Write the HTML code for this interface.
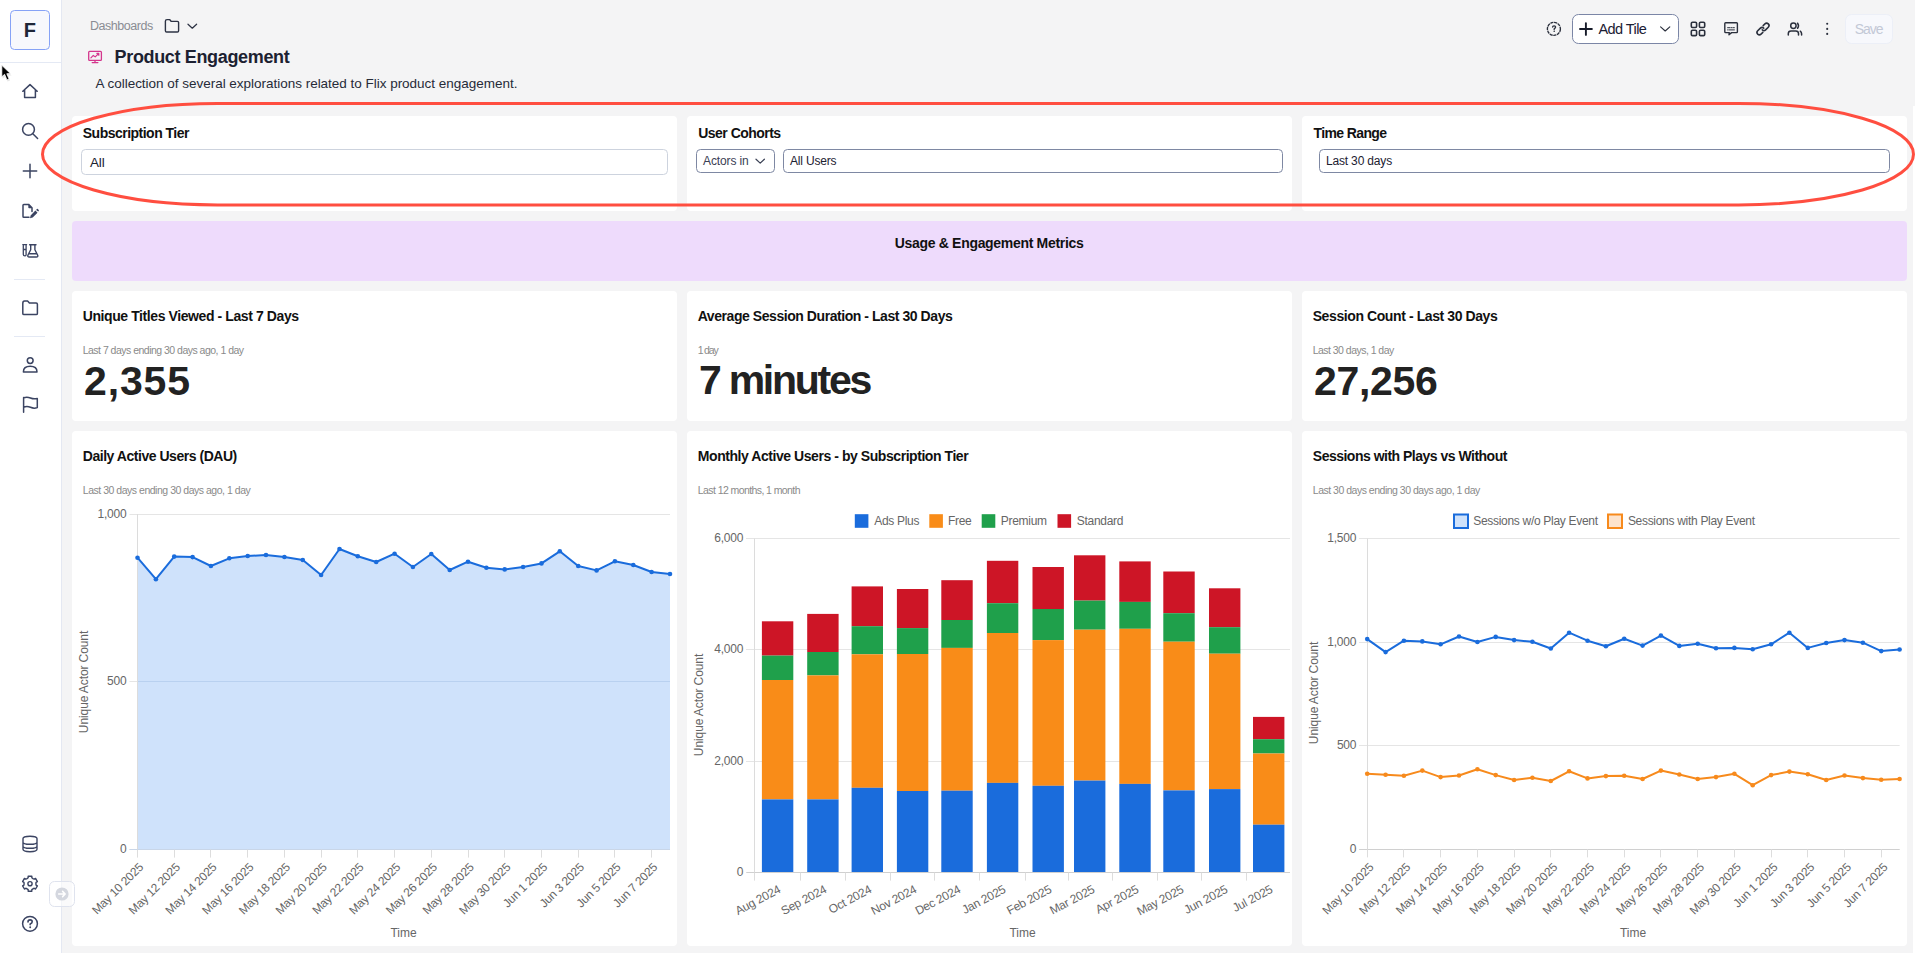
<!DOCTYPE html>
<html><head><meta charset="utf-8"><title>Product Engagement</title>
<style>html,body{margin:0;padding:0;width:1915px;height:953px;overflow:hidden;background:#f4f4f5}
svg{display:block;font-family:"Liberation Sans", sans-serif}</style></head>
<body><svg width="1915" height="953" viewBox="0 0 1915 953">
<rect x="0" y="0" width="1915" height="953" rx="0" fill="#f4f4f5" />
<rect x="0" y="0" width="61" height="953" rx="0" fill="#ffffff" />
<rect x="61" y="0" width="1" height="953" rx="0" fill="#e4e8f2" />
<rect x="0" y="62" width="61" height="1" rx="0" fill="#e4e9f4" />
<rect x="14" y="279" width="31" height="1" rx="0" fill="#e4e9f4" />
<rect x="14" y="336" width="31" height="1" rx="0" fill="#e4e9f4" />
<rect x="10.5" y="10.5" width="39" height="39" rx="4" fill="#f7f8fc" stroke="#86a2f6" stroke-width="1" />
<text x="23.80" y="37" font-size="20" font-weight="700" fill="#1e2638" letter-spacing="0.000" text-anchor="start" >F</text>
<rect x="1913" y="106" width="2" height="847" rx="0" fill="#ffffff" />
<rect x="72" y="116" width="605" height="95" rx="4" fill="#ffffff" />
<rect x="72" y="291" width="605" height="130" rx="4" fill="#ffffff" />
<rect x="72" y="431" width="605" height="515" rx="4" fill="#ffffff" />
<rect x="687" y="116" width="605" height="95" rx="4" fill="#ffffff" />
<rect x="687" y="291" width="605" height="130" rx="4" fill="#ffffff" />
<rect x="687" y="431" width="605" height="515" rx="4" fill="#ffffff" />
<rect x="1302" y="116" width="605" height="95" rx="4" fill="#ffffff" />
<rect x="1302" y="291" width="605" height="130" rx="4" fill="#ffffff" />
<rect x="1302" y="431" width="605" height="515" rx="4" fill="#ffffff" />
<rect x="72" y="221" width="1835" height="60" rx="4" fill="#eedbfc" />
<text x="89.90" y="30.1" font-size="12.5" font-weight="400" fill="#8a8c93" letter-spacing="-0.450" text-anchor="start" >Dashboards</text>
<text x="114.60" y="63.1" font-size="18" font-weight="700" fill="#1c2131" letter-spacing="-0.349" text-anchor="start" >Product Engagement</text>
<text x="95.50" y="87.9" font-size="13.5" font-weight="400" fill="#262b38" letter-spacing="-0.019" text-anchor="start" >A collection of several explorations related to Flix product engagement.</text>
<text x="82.80" y="137.8" font-size="14" font-weight="700" fill="#111111" letter-spacing="-0.514" text-anchor="start" >Subscription Tier</text>
<text x="698.30" y="138" font-size="14" font-weight="700" fill="#111111" letter-spacing="-0.536" text-anchor="start" >User Cohorts</text>
<text x="1313.50" y="138" font-size="14" font-weight="700" fill="#111111" letter-spacing="-0.613" text-anchor="start" >Time Range</text>
<rect x="81.5" y="149.5" width="586" height="25" rx="4" fill="#ffffff" stroke="#cdd3de" stroke-width="1" />
<text x="90.00" y="167" font-size="13.5" font-weight="400" fill="#1c2131" letter-spacing="-0.152" text-anchor="start" >All</text>
<rect x="696.5" y="149.5" width="78" height="23" rx="4" fill="#ffffff" stroke="#7e88a3" stroke-width="1" />
<text x="703.00" y="165" font-size="12" font-weight="400" fill="#3a4054" letter-spacing="-0.126" text-anchor="start" >Actors in</text>
<rect x="783.5" y="149.5" width="499" height="23" rx="4" fill="#ffffff" stroke="#7e88a3" stroke-width="1" />
<text x="790.00" y="165" font-size="12" font-weight="400" fill="#1c2131" letter-spacing="-0.188" text-anchor="start" >All Users</text>
<rect x="1319.5" y="149.5" width="570" height="23" rx="4" fill="#ffffff" stroke="#7e88a3" stroke-width="1" />
<text x="1325.90" y="165" font-size="12" font-weight="400" fill="#1c2131" letter-spacing="-0.159" text-anchor="start" >Last 30 days</text>
<text x="894.70" y="247.6" font-size="14" font-weight="700" fill="#111111" letter-spacing="-0.310" text-anchor="start" >Usage &amp; Engagement Metrics</text>
<text x="82.70" y="321.1" font-size="14" font-weight="700" fill="#111111" letter-spacing="-0.406" text-anchor="start" >Unique Titles Viewed - Last 7 Days</text>
<text x="82.70" y="354.2" font-size="10.5" font-weight="400" fill="#8a8a8a" letter-spacing="-0.512" text-anchor="start" >Last 7 days ending 30 days ago, 1 day</text>
<text x="84.00" y="395.2" font-size="41" font-weight="700" fill="#222222" letter-spacing="0.876" text-anchor="start" >2,355</text>
<text x="697.70" y="321.1" font-size="14" font-weight="700" fill="#111111" letter-spacing="-0.440" text-anchor="start" >Average Session Duration - Last 30 Days</text>
<text x="697.70" y="354.2" font-size="10.5" font-weight="400" fill="#8a8a8a" letter-spacing="-1.184" text-anchor="start" >1 day</text>
<text x="699.00" y="394" font-size="41" font-weight="700" fill="#222222" letter-spacing="-2.261" text-anchor="start" >7 minutes</text>
<text x="1312.70" y="321.1" font-size="14" font-weight="700" fill="#111111" letter-spacing="-0.406" text-anchor="start" >Session Count - Last 30 Days</text>
<text x="1312.70" y="354.2" font-size="10.5" font-weight="400" fill="#8a8a8a" letter-spacing="-0.528" text-anchor="start" >Last 30 days, 1 day</text>
<text x="1314.00" y="395.2" font-size="41" font-weight="700" fill="#222222" letter-spacing="-0.320" text-anchor="start" >27,256</text>
<text x="82.80" y="461" font-size="14" font-weight="700" fill="#111111" letter-spacing="-0.468" text-anchor="start" >Daily Active Users (DAU)</text>
<text x="82.80" y="494.2" font-size="10.5" font-weight="400" fill="#8a8a8a" letter-spacing="-0.478" text-anchor="start" >Last 30 days ending 30 days ago, 1 day</text>
<text x="697.80" y="461" font-size="14" font-weight="700" fill="#111111" letter-spacing="-0.442" text-anchor="start" >Monthly Active Users - by Subscription Tier</text>
<text x="697.80" y="494.2" font-size="10.5" font-weight="400" fill="#8a8a8a" letter-spacing="-0.583" text-anchor="start" >Last 12 months, 1 month</text>
<text x="1312.80" y="461" font-size="14" font-weight="700" fill="#111111" letter-spacing="-0.503" text-anchor="start" >Sessions with Plays vs Without</text>
<text x="1312.80" y="494.2" font-size="10.5" font-weight="400" fill="#8a8a8a" letter-spacing="-0.492" text-anchor="start" >Last 30 days ending 30 days ago, 1 day</text>
<rect x="1572.5" y="14.5" width="106" height="29" rx="6" fill="#ffffff" stroke="#7b86a6" stroke-width="1" />
<text x="1598.50" y="34.1" font-size="14.5" font-weight="400" fill="#1b2033" letter-spacing="-0.570" text-anchor="start" >Add Tile</text>
<rect x="1845.5" y="14.5" width="47" height="29" rx="6" fill="#f7f8fc" stroke="#eceff7" stroke-width="1" />
<text x="1854.80" y="33.8" font-size="14" font-weight="400" fill="#c3c8d6" letter-spacing="-1.075" text-anchor="start" >Save</text>
<line x1="129.5" y1="514.5" x2="670.0" y2="514.5" stroke="#e5e5e5" stroke-width="1" />
<text x="126.5" y="517.7" font-size="12" fill="#666666" text-anchor="end" letter-spacing="-0.2">1,000</text>
<line x1="129.5" y1="681.5" x2="670.0" y2="681.5" stroke="#e5e5e5" stroke-width="1" />
<text x="126.5" y="685.4" font-size="12" fill="#666666" text-anchor="end" letter-spacing="-0.2">500</text>
<line x1="129.5" y1="849.5" x2="670.0" y2="849.5" stroke="#e5e5e5" stroke-width="1" />
<text x="126.5" y="853.1" font-size="12" fill="#666666" text-anchor="end" letter-spacing="-0.2">0</text>
<polygon points="137.5,849.6 137.5,557.7 155.9,579.2 174.2,556.6 192.6,557.1 210.9,566.0 229.3,558.3 247.7,556.0 266.0,555.0 284.4,557.0 302.8,560.0 321.1,575.0 339.5,549.0 357.8,556.3 376.2,562.0 394.6,553.7 412.9,567.0 431.3,554.0 449.7,570.0 468.0,561.7 486.4,567.7 504.7,569.4 523.1,567.0 541.5,563.4 559.8,551.3 578.2,566.0 596.6,570.4 614.9,561.3 633.3,565.0 651.6,572.0 670.0,574.0 670.0,849.6" fill="#cfe2fb"/>
<line x1="137.5" y1="681.5" x2="670.0" y2="681.5" stroke="#b9d1f0" stroke-width="1" />
<line x1="137.5" y1="514.2" x2="137.5" y2="849.6" stroke="#dcdcdc" stroke-width="1" />
<line x1="129.5" y1="849.5" x2="670.0" y2="849.5" stroke="#c9d6e8" stroke-width="1" />
<polyline points="137.5,557.7 155.9,579.2 174.2,556.6 192.6,557.1 210.9,566.0 229.3,558.3 247.7,556.0 266.0,555.0 284.4,557.0 302.8,560.0 321.1,575.0 339.5,549.0 357.8,556.3 376.2,562.0 394.6,553.7 412.9,567.0 431.3,554.0 449.7,570.0 468.0,561.7 486.4,567.7 504.7,569.4 523.1,567.0 541.5,563.4 559.8,551.3 578.2,566.0 596.6,570.4 614.9,561.3 633.3,565.0 651.6,572.0 670.0,574.0" fill="none" stroke="#1a6cdc" stroke-width="2" stroke-linejoin="round"/>
<circle cx="137.5" cy="557.7" r="2.3" fill="#1a6cdc"/>
<circle cx="155.9" cy="579.2" r="2.3" fill="#1a6cdc"/>
<circle cx="174.2" cy="556.6" r="2.3" fill="#1a6cdc"/>
<circle cx="192.6" cy="557.1" r="2.3" fill="#1a6cdc"/>
<circle cx="210.9" cy="566.0" r="2.3" fill="#1a6cdc"/>
<circle cx="229.3" cy="558.3" r="2.3" fill="#1a6cdc"/>
<circle cx="247.7" cy="556.0" r="2.3" fill="#1a6cdc"/>
<circle cx="266.0" cy="555.0" r="2.3" fill="#1a6cdc"/>
<circle cx="284.4" cy="557.0" r="2.3" fill="#1a6cdc"/>
<circle cx="302.8" cy="560.0" r="2.3" fill="#1a6cdc"/>
<circle cx="321.1" cy="575.0" r="2.3" fill="#1a6cdc"/>
<circle cx="339.5" cy="549.0" r="2.3" fill="#1a6cdc"/>
<circle cx="357.8" cy="556.3" r="2.3" fill="#1a6cdc"/>
<circle cx="376.2" cy="562.0" r="2.3" fill="#1a6cdc"/>
<circle cx="394.6" cy="553.7" r="2.3" fill="#1a6cdc"/>
<circle cx="412.9" cy="567.0" r="2.3" fill="#1a6cdc"/>
<circle cx="431.3" cy="554.0" r="2.3" fill="#1a6cdc"/>
<circle cx="449.7" cy="570.0" r="2.3" fill="#1a6cdc"/>
<circle cx="468.0" cy="561.7" r="2.3" fill="#1a6cdc"/>
<circle cx="486.4" cy="567.7" r="2.3" fill="#1a6cdc"/>
<circle cx="504.7" cy="569.4" r="2.3" fill="#1a6cdc"/>
<circle cx="523.1" cy="567.0" r="2.3" fill="#1a6cdc"/>
<circle cx="541.5" cy="563.4" r="2.3" fill="#1a6cdc"/>
<circle cx="559.8" cy="551.3" r="2.3" fill="#1a6cdc"/>
<circle cx="578.2" cy="566.0" r="2.3" fill="#1a6cdc"/>
<circle cx="596.6" cy="570.4" r="2.3" fill="#1a6cdc"/>
<circle cx="614.9" cy="561.3" r="2.3" fill="#1a6cdc"/>
<circle cx="633.3" cy="565.0" r="2.3" fill="#1a6cdc"/>
<circle cx="651.6" cy="572.0" r="2.3" fill="#1a6cdc"/>
<circle cx="670.0" cy="574.0" r="2.3" fill="#1a6cdc"/>
<line x1="137.5" y1="849.6" x2="137.5" y2="857.6" stroke="#dddddd" stroke-width="1" />
<text x="144.0" y="868.0" font-size="12" fill="#666666" text-anchor="end" transform="rotate(-45 144.0 868.0)" letter-spacing="-0.25">May 10 2025</text>
<line x1="174.5" y1="849.6" x2="174.5" y2="857.6" stroke="#dddddd" stroke-width="1" />
<text x="180.7" y="868.0" font-size="12" fill="#666666" text-anchor="end" transform="rotate(-45 180.7 868.0)" letter-spacing="-0.25">May 12 2025</text>
<line x1="210.5" y1="849.6" x2="210.5" y2="857.6" stroke="#dddddd" stroke-width="1" />
<text x="217.4" y="868.0" font-size="12" fill="#666666" text-anchor="end" transform="rotate(-45 217.4 868.0)" letter-spacing="-0.25">May 14 2025</text>
<line x1="247.5" y1="849.6" x2="247.5" y2="857.6" stroke="#dddddd" stroke-width="1" />
<text x="254.2" y="868.0" font-size="12" fill="#666666" text-anchor="end" transform="rotate(-45 254.2 868.0)" letter-spacing="-0.25">May 16 2025</text>
<line x1="284.5" y1="849.6" x2="284.5" y2="857.6" stroke="#dddddd" stroke-width="1" />
<text x="290.9" y="868.0" font-size="12" fill="#666666" text-anchor="end" transform="rotate(-45 290.9 868.0)" letter-spacing="-0.25">May 18 2025</text>
<line x1="321.5" y1="849.6" x2="321.5" y2="857.6" stroke="#dddddd" stroke-width="1" />
<text x="327.6" y="868.0" font-size="12" fill="#666666" text-anchor="end" transform="rotate(-45 327.6 868.0)" letter-spacing="-0.25">May 20 2025</text>
<line x1="357.5" y1="849.6" x2="357.5" y2="857.6" stroke="#dddddd" stroke-width="1" />
<text x="364.3" y="868.0" font-size="12" fill="#666666" text-anchor="end" transform="rotate(-45 364.3 868.0)" letter-spacing="-0.25">May 22 2025</text>
<line x1="394.5" y1="849.6" x2="394.5" y2="857.6" stroke="#dddddd" stroke-width="1" />
<text x="401.1" y="868.0" font-size="12" fill="#666666" text-anchor="end" transform="rotate(-45 401.1 868.0)" letter-spacing="-0.25">May 24 2025</text>
<line x1="431.5" y1="849.6" x2="431.5" y2="857.6" stroke="#dddddd" stroke-width="1" />
<text x="437.8" y="868.0" font-size="12" fill="#666666" text-anchor="end" transform="rotate(-45 437.8 868.0)" letter-spacing="-0.25">May 26 2025</text>
<line x1="468.5" y1="849.6" x2="468.5" y2="857.6" stroke="#dddddd" stroke-width="1" />
<text x="474.5" y="868.0" font-size="12" fill="#666666" text-anchor="end" transform="rotate(-45 474.5 868.0)" letter-spacing="-0.25">May 28 2025</text>
<line x1="504.5" y1="849.6" x2="504.5" y2="857.6" stroke="#dddddd" stroke-width="1" />
<text x="511.2" y="868.0" font-size="12" fill="#666666" text-anchor="end" transform="rotate(-45 511.2 868.0)" letter-spacing="-0.25">May 30 2025</text>
<line x1="541.5" y1="849.6" x2="541.5" y2="857.6" stroke="#dddddd" stroke-width="1" />
<text x="548.0" y="868.0" font-size="12" fill="#666666" text-anchor="end" transform="rotate(-45 548.0 868.0)" letter-spacing="-0.25">Jun 1 2025</text>
<line x1="578.5" y1="849.6" x2="578.5" y2="857.6" stroke="#dddddd" stroke-width="1" />
<text x="584.7" y="868.0" font-size="12" fill="#666666" text-anchor="end" transform="rotate(-45 584.7 868.0)" letter-spacing="-0.25">Jun 3 2025</text>
<line x1="614.5" y1="849.6" x2="614.5" y2="857.6" stroke="#dddddd" stroke-width="1" />
<text x="621.4" y="868.0" font-size="12" fill="#666666" text-anchor="end" transform="rotate(-45 621.4 868.0)" letter-spacing="-0.25">Jun 5 2025</text>
<line x1="651.5" y1="849.6" x2="651.5" y2="857.6" stroke="#dddddd" stroke-width="1" />
<text x="658.1" y="868.0" font-size="12" fill="#666666" text-anchor="end" transform="rotate(-45 658.1 868.0)" letter-spacing="-0.25">Jun 7 2025</text>
<text x="403.5" y="937" font-size="12" fill="#666666" text-anchor="middle">Time</text>
<text x="88" y="682" font-size="12" fill="#666666" text-anchor="middle" transform="rotate(-90 88 682)" letter-spacing="-0.1">Unique Actor Count</text>
<line x1="746" y1="538.5" x2="1290.0" y2="538.5" stroke="#e5e5e5" stroke-width="1" />
<text x="743.3" y="542.0" font-size="12" fill="#666666" text-anchor="end" letter-spacing="-0.2">6,000</text>
<line x1="746" y1="649.5" x2="1290.0" y2="649.5" stroke="#e5e5e5" stroke-width="1" />
<text x="743.3" y="653.3" font-size="12" fill="#666666" text-anchor="end" letter-spacing="-0.2">4,000</text>
<line x1="746" y1="761.5" x2="1290.0" y2="761.5" stroke="#e5e5e5" stroke-width="1" />
<text x="743.3" y="764.7" font-size="12" fill="#666666" text-anchor="end" letter-spacing="-0.2">2,000</text>
<line x1="746" y1="872.5" x2="1290.0" y2="872.5" stroke="#e5e5e5" stroke-width="1" />
<text x="743.3" y="876.0" font-size="12" fill="#666666" text-anchor="end" letter-spacing="-0.2">0</text>
<line x1="754.5" y1="538.6" x2="754.5" y2="872.6" stroke="#dcdcdc" stroke-width="1" />
<rect x="761.9" y="621.3" width="31.4" height="34.30000000000007" rx="0" fill="#cd1526" />
<rect x="761.9" y="655.6" width="31.4" height="24.399999999999977" rx="0" fill="#1fa04b" />
<rect x="761.9" y="680.0" width="31.4" height="119.39999999999998" rx="0" fill="#f98c18" />
<rect x="761.9" y="799.4" width="31.4" height="73.20000000000005" rx="0" fill="#1a6cdc" />
<rect x="807.2" y="613.9" width="31.4" height="38.10000000000002" rx="0" fill="#cd1526" />
<rect x="807.2" y="652.0" width="31.4" height="23.399999999999977" rx="0" fill="#1fa04b" />
<rect x="807.2" y="675.4" width="31.4" height="124.0" rx="0" fill="#f98c18" />
<rect x="807.2" y="799.4" width="31.4" height="73.20000000000005" rx="0" fill="#1a6cdc" />
<rect x="851.6" y="586.4" width="31.4" height="39.80000000000007" rx="0" fill="#cd1526" />
<rect x="851.6" y="626.2" width="31.4" height="28.09999999999991" rx="0" fill="#1fa04b" />
<rect x="851.6" y="654.3" width="31.4" height="133.5" rx="0" fill="#f98c18" />
<rect x="851.6" y="787.8" width="31.4" height="84.80000000000007" rx="0" fill="#1a6cdc" />
<rect x="896.9" y="589.0" width="31.4" height="39.10000000000002" rx="0" fill="#cd1526" />
<rect x="896.9" y="628.1" width="31.4" height="25.899999999999977" rx="0" fill="#1fa04b" />
<rect x="896.9" y="654.0" width="31.4" height="137.0" rx="0" fill="#f98c18" />
<rect x="896.9" y="791.0" width="31.4" height="81.60000000000002" rx="0" fill="#1a6cdc" />
<rect x="941.3" y="580.2" width="31.4" height="39.799999999999955" rx="0" fill="#cd1526" />
<rect x="941.3" y="620.0" width="31.4" height="27.899999999999977" rx="0" fill="#1fa04b" />
<rect x="941.3" y="647.9" width="31.4" height="142.80000000000007" rx="0" fill="#f98c18" />
<rect x="941.3" y="790.7" width="31.4" height="81.89999999999998" rx="0" fill="#1a6cdc" />
<rect x="986.9" y="560.8" width="31.4" height="42.40000000000009" rx="0" fill="#cd1526" />
<rect x="986.9" y="603.2" width="31.4" height="29.799999999999955" rx="0" fill="#1fa04b" />
<rect x="986.9" y="633.0" width="31.4" height="149.89999999999998" rx="0" fill="#f98c18" />
<rect x="986.9" y="782.9" width="31.4" height="89.70000000000005" rx="0" fill="#1a6cdc" />
<rect x="1032.5" y="567.0" width="31.4" height="42.0" rx="0" fill="#cd1526" />
<rect x="1032.5" y="609.0" width="31.4" height="31.100000000000023" rx="0" fill="#1fa04b" />
<rect x="1032.5" y="640.1" width="31.4" height="145.69999999999993" rx="0" fill="#f98c18" />
<rect x="1032.5" y="785.8" width="31.4" height="86.80000000000007" rx="0" fill="#1a6cdc" />
<rect x="1074.0" y="555.3" width="31.4" height="45.30000000000007" rx="0" fill="#cd1526" />
<rect x="1074.0" y="600.6" width="31.4" height="29.100000000000023" rx="0" fill="#1fa04b" />
<rect x="1074.0" y="629.7" width="31.4" height="150.89999999999998" rx="0" fill="#f98c18" />
<rect x="1074.0" y="780.6" width="31.4" height="92.0" rx="0" fill="#1a6cdc" />
<rect x="1119.3" y="561.4" width="31.4" height="40.5" rx="0" fill="#cd1526" />
<rect x="1119.3" y="601.9" width="31.4" height="26.899999999999977" rx="0" fill="#1fa04b" />
<rect x="1119.3" y="628.8" width="31.4" height="155.10000000000002" rx="0" fill="#f98c18" />
<rect x="1119.3" y="783.9" width="31.4" height="88.70000000000005" rx="0" fill="#1a6cdc" />
<rect x="1163.3" y="571.5" width="31.4" height="41.700000000000045" rx="0" fill="#cd1526" />
<rect x="1163.3" y="613.2" width="31.4" height="28.5" rx="0" fill="#1fa04b" />
<rect x="1163.3" y="641.7" width="31.4" height="148.69999999999993" rx="0" fill="#f98c18" />
<rect x="1163.3" y="790.4" width="31.4" height="82.20000000000005" rx="0" fill="#1a6cdc" />
<rect x="1209.0" y="588.3" width="31.4" height="38.90000000000009" rx="0" fill="#cd1526" />
<rect x="1209.0" y="627.2" width="31.4" height="26.5" rx="0" fill="#1fa04b" />
<rect x="1209.0" y="653.7" width="31.4" height="135.39999999999998" rx="0" fill="#f98c18" />
<rect x="1209.0" y="789.1" width="31.4" height="83.5" rx="0" fill="#1a6cdc" />
<rect x="1253.0" y="716.9" width="31.4" height="22.300000000000068" rx="0" fill="#cd1526" />
<rect x="1253.0" y="739.2" width="31.4" height="14.299999999999955" rx="0" fill="#1fa04b" />
<rect x="1253.0" y="753.5" width="31.4" height="71.20000000000005" rx="0" fill="#f98c18" />
<rect x="1253.0" y="824.7" width="31.4" height="47.89999999999998" rx="0" fill="#1a6cdc" />
<line x1="746.5" y1="872.5" x2="1290.0" y2="872.5" stroke="#d0d0d0" stroke-width="1" />
<line x1="754.5" y1="872.6" x2="754.5" y2="880.6" stroke="#dddddd" stroke-width="1" />
<text x="781.5" y="892.0" font-size="12" fill="#666666" text-anchor="end" transform="rotate(-28 781.5 892.0)" letter-spacing="-0.25">Aug 2024</text>
<line x1="800.5" y1="872.6" x2="800.5" y2="880.6" stroke="#dddddd" stroke-width="1" />
<text x="827.4" y="892.0" font-size="12" fill="#666666" text-anchor="end" transform="rotate(-28 827.4 892.0)" letter-spacing="-0.25">Sep 2024</text>
<line x1="845.5" y1="872.6" x2="845.5" y2="880.6" stroke="#dddddd" stroke-width="1" />
<text x="872.4" y="892.0" font-size="12" fill="#666666" text-anchor="end" transform="rotate(-28 872.4 892.0)" letter-spacing="-0.25">Oct 2024</text>
<line x1="890.5" y1="872.6" x2="890.5" y2="880.6" stroke="#dddddd" stroke-width="1" />
<text x="917.4" y="892.0" font-size="12" fill="#666666" text-anchor="end" transform="rotate(-28 917.4 892.0)" letter-spacing="-0.25">Nov 2024</text>
<line x1="934.5" y1="872.6" x2="934.5" y2="880.6" stroke="#dddddd" stroke-width="1" />
<text x="961.5" y="892.0" font-size="12" fill="#666666" text-anchor="end" transform="rotate(-28 961.5 892.0)" letter-spacing="-0.25">Dec 2024</text>
<line x1="979.5" y1="872.6" x2="979.5" y2="880.6" stroke="#dddddd" stroke-width="1" />
<text x="1006.5" y="892.0" font-size="12" fill="#666666" text-anchor="end" transform="rotate(-28 1006.5 892.0)" letter-spacing="-0.25">Jan 2025</text>
<line x1="1025.5" y1="872.6" x2="1025.5" y2="880.6" stroke="#dddddd" stroke-width="1" />
<text x="1052.4" y="892.0" font-size="12" fill="#666666" text-anchor="end" transform="rotate(-28 1052.4 892.0)" letter-spacing="-0.25">Feb 2025</text>
<line x1="1068.5" y1="872.6" x2="1068.5" y2="880.6" stroke="#dddddd" stroke-width="1" />
<text x="1095.5" y="892.0" font-size="12" fill="#666666" text-anchor="end" transform="rotate(-28 1095.5 892.0)" letter-spacing="-0.25">Mar 2025</text>
<line x1="1112.5" y1="872.6" x2="1112.5" y2="880.6" stroke="#dddddd" stroke-width="1" />
<text x="1139.5" y="892.0" font-size="12" fill="#666666" text-anchor="end" transform="rotate(-28 1139.5 892.0)" letter-spacing="-0.25">Apr 2025</text>
<line x1="1157.5" y1="872.6" x2="1157.5" y2="880.6" stroke="#dddddd" stroke-width="1" />
<text x="1184.5" y="892.0" font-size="12" fill="#666666" text-anchor="end" transform="rotate(-28 1184.5 892.0)" letter-spacing="-0.25">May 2025</text>
<line x1="1201.5" y1="872.6" x2="1201.5" y2="880.6" stroke="#dddddd" stroke-width="1" />
<text x="1228.5" y="892.0" font-size="12" fill="#666666" text-anchor="end" transform="rotate(-28 1228.5 892.0)" letter-spacing="-0.25">Jun 2025</text>
<line x1="1246.5" y1="872.6" x2="1246.5" y2="880.6" stroke="#dddddd" stroke-width="1" />
<text x="1273.5" y="892.0" font-size="12" fill="#666666" text-anchor="end" transform="rotate(-28 1273.5 892.0)" letter-spacing="-0.25">Jul 2025</text>
<text x="1022.5" y="937" font-size="12" fill="#666666" text-anchor="middle">Time</text>
<text x="703" y="705" font-size="12" fill="#666666" text-anchor="middle" transform="rotate(-90 703 705)" letter-spacing="-0.1">Unique Actor Count</text>
<rect x="854.8" y="514.2" width="13.6" height="13.6" rx="0" fill="#1a6cdc" />
<text x="874.1999999999999" y="524.6" font-size="12" fill="#666666" letter-spacing="-0.3">Ads Plus</text>
<rect x="929.3" y="514.2" width="13.6" height="13.6" rx="0" fill="#f98c18" />
<text x="948.0" y="524.6" font-size="12" fill="#666666" letter-spacing="-0.3">Free</text>
<rect x="981.7" y="514.2" width="13.6" height="13.6" rx="0" fill="#1fa04b" />
<text x="1000.8" y="524.6" font-size="12" fill="#666666" letter-spacing="-0.3">Premium</text>
<rect x="1057.5" y="514.2" width="13.6" height="13.6" rx="0" fill="#cd1526" />
<text x="1076.8" y="524.6" font-size="12" fill="#666666" letter-spacing="-0.3">Standard</text>
<line x1="1359" y1="538.5" x2="1899.6" y2="538.5" stroke="#e5e5e5" stroke-width="1" />
<text x="1356.3" y="542.0" font-size="12" fill="#666666" text-anchor="end" letter-spacing="-0.2">1,500</text>
<line x1="1359" y1="642.5" x2="1899.6" y2="642.5" stroke="#e5e5e5" stroke-width="1" />
<text x="1356.3" y="645.6" font-size="12" fill="#666666" text-anchor="end" letter-spacing="-0.2">1,000</text>
<line x1="1359" y1="745.5" x2="1899.6" y2="745.5" stroke="#e5e5e5" stroke-width="1" />
<text x="1356.3" y="749.2" font-size="12" fill="#666666" text-anchor="end" letter-spacing="-0.2">500</text>
<line x1="1359" y1="849.5" x2="1899.6" y2="849.5" stroke="#e5e5e5" stroke-width="1" />
<text x="1356.3" y="852.8" font-size="12" fill="#666666" text-anchor="end" letter-spacing="-0.2">0</text>
<line x1="1367.5" y1="538.6" x2="1367.5" y2="849.4" stroke="#dcdcdc" stroke-width="1" />
<line x1="1359.2" y1="849.5" x2="1899.6" y2="849.5" stroke="#d0d0d0" stroke-width="1" />
<polyline points="1367.2,639.1 1385.6,652.1 1403.9,640.7 1422.3,641.4 1440.6,644.3 1459.0,636.5 1477.4,642.0 1495.7,636.9 1514.1,640.1 1532.4,641.7 1550.8,648.5 1569.1,632.7 1587.5,640.7 1605.9,646.3 1624.2,638.8 1642.6,645.6 1660.9,635.6 1679.3,645.9 1697.7,643.7 1716.0,648.2 1734.4,647.9 1752.7,649.2 1771.1,644.3 1789.4,632.7 1807.8,647.9 1826.2,643.0 1844.5,640.1 1862.9,642.7 1881.2,651.1 1899.6,649.5" fill="none" stroke="#1a6cdc" stroke-width="2" stroke-linejoin="round"/>
<circle cx="1367.2" cy="639.1" r="2.3" fill="#1a6cdc"/>
<circle cx="1385.6" cy="652.1" r="2.3" fill="#1a6cdc"/>
<circle cx="1403.9" cy="640.7" r="2.3" fill="#1a6cdc"/>
<circle cx="1422.3" cy="641.4" r="2.3" fill="#1a6cdc"/>
<circle cx="1440.6" cy="644.3" r="2.3" fill="#1a6cdc"/>
<circle cx="1459.0" cy="636.5" r="2.3" fill="#1a6cdc"/>
<circle cx="1477.4" cy="642.0" r="2.3" fill="#1a6cdc"/>
<circle cx="1495.7" cy="636.9" r="2.3" fill="#1a6cdc"/>
<circle cx="1514.1" cy="640.1" r="2.3" fill="#1a6cdc"/>
<circle cx="1532.4" cy="641.7" r="2.3" fill="#1a6cdc"/>
<circle cx="1550.8" cy="648.5" r="2.3" fill="#1a6cdc"/>
<circle cx="1569.1" cy="632.7" r="2.3" fill="#1a6cdc"/>
<circle cx="1587.5" cy="640.7" r="2.3" fill="#1a6cdc"/>
<circle cx="1605.9" cy="646.3" r="2.3" fill="#1a6cdc"/>
<circle cx="1624.2" cy="638.8" r="2.3" fill="#1a6cdc"/>
<circle cx="1642.6" cy="645.6" r="2.3" fill="#1a6cdc"/>
<circle cx="1660.9" cy="635.6" r="2.3" fill="#1a6cdc"/>
<circle cx="1679.3" cy="645.9" r="2.3" fill="#1a6cdc"/>
<circle cx="1697.7" cy="643.7" r="2.3" fill="#1a6cdc"/>
<circle cx="1716.0" cy="648.2" r="2.3" fill="#1a6cdc"/>
<circle cx="1734.4" cy="647.9" r="2.3" fill="#1a6cdc"/>
<circle cx="1752.7" cy="649.2" r="2.3" fill="#1a6cdc"/>
<circle cx="1771.1" cy="644.3" r="2.3" fill="#1a6cdc"/>
<circle cx="1789.4" cy="632.7" r="2.3" fill="#1a6cdc"/>
<circle cx="1807.8" cy="647.9" r="2.3" fill="#1a6cdc"/>
<circle cx="1826.2" cy="643.0" r="2.3" fill="#1a6cdc"/>
<circle cx="1844.5" cy="640.1" r="2.3" fill="#1a6cdc"/>
<circle cx="1862.9" cy="642.7" r="2.3" fill="#1a6cdc"/>
<circle cx="1881.2" cy="651.1" r="2.3" fill="#1a6cdc"/>
<circle cx="1899.6" cy="649.5" r="2.3" fill="#1a6cdc"/>
<polyline points="1367.2,773.8 1385.6,774.8 1403.9,775.8 1422.3,770.6 1440.6,777.1 1459.0,775.5 1477.4,769.3 1495.7,775.1 1514.1,780.0 1532.4,777.7 1550.8,781.0 1569.1,771.3 1587.5,778.4 1605.9,776.1 1624.2,775.8 1642.6,779.0 1660.9,770.6 1679.3,774.5 1697.7,779.0 1716.0,777.1 1734.4,773.8 1752.7,785.2 1771.1,775.1 1789.4,771.6 1807.8,774.2 1826.2,780.0 1844.5,775.5 1862.9,778.1 1881.2,779.7 1899.6,779.0" fill="none" stroke="#f78a1c" stroke-width="2" stroke-linejoin="round"/>
<circle cx="1367.2" cy="773.8" r="2.3" fill="#f78a1c"/>
<circle cx="1385.6" cy="774.8" r="2.3" fill="#f78a1c"/>
<circle cx="1403.9" cy="775.8" r="2.3" fill="#f78a1c"/>
<circle cx="1422.3" cy="770.6" r="2.3" fill="#f78a1c"/>
<circle cx="1440.6" cy="777.1" r="2.3" fill="#f78a1c"/>
<circle cx="1459.0" cy="775.5" r="2.3" fill="#f78a1c"/>
<circle cx="1477.4" cy="769.3" r="2.3" fill="#f78a1c"/>
<circle cx="1495.7" cy="775.1" r="2.3" fill="#f78a1c"/>
<circle cx="1514.1" cy="780.0" r="2.3" fill="#f78a1c"/>
<circle cx="1532.4" cy="777.7" r="2.3" fill="#f78a1c"/>
<circle cx="1550.8" cy="781.0" r="2.3" fill="#f78a1c"/>
<circle cx="1569.1" cy="771.3" r="2.3" fill="#f78a1c"/>
<circle cx="1587.5" cy="778.4" r="2.3" fill="#f78a1c"/>
<circle cx="1605.9" cy="776.1" r="2.3" fill="#f78a1c"/>
<circle cx="1624.2" cy="775.8" r="2.3" fill="#f78a1c"/>
<circle cx="1642.6" cy="779.0" r="2.3" fill="#f78a1c"/>
<circle cx="1660.9" cy="770.6" r="2.3" fill="#f78a1c"/>
<circle cx="1679.3" cy="774.5" r="2.3" fill="#f78a1c"/>
<circle cx="1697.7" cy="779.0" r="2.3" fill="#f78a1c"/>
<circle cx="1716.0" cy="777.1" r="2.3" fill="#f78a1c"/>
<circle cx="1734.4" cy="773.8" r="2.3" fill="#f78a1c"/>
<circle cx="1752.7" cy="785.2" r="2.3" fill="#f78a1c"/>
<circle cx="1771.1" cy="775.1" r="2.3" fill="#f78a1c"/>
<circle cx="1789.4" cy="771.6" r="2.3" fill="#f78a1c"/>
<circle cx="1807.8" cy="774.2" r="2.3" fill="#f78a1c"/>
<circle cx="1826.2" cy="780.0" r="2.3" fill="#f78a1c"/>
<circle cx="1844.5" cy="775.5" r="2.3" fill="#f78a1c"/>
<circle cx="1862.9" cy="778.1" r="2.3" fill="#f78a1c"/>
<circle cx="1881.2" cy="779.7" r="2.3" fill="#f78a1c"/>
<circle cx="1899.6" cy="779.0" r="2.3" fill="#f78a1c"/>
<line x1="1367.5" y1="849.4" x2="1367.5" y2="857.4" stroke="#dddddd" stroke-width="1" />
<text x="1374.4" y="868.0" font-size="12" fill="#666666" text-anchor="end" transform="rotate(-45 1374.4 868.0)" letter-spacing="-0.25">May 10 2025</text>
<line x1="1403.5" y1="849.4" x2="1403.5" y2="857.4" stroke="#dddddd" stroke-width="1" />
<text x="1411.1" y="868.0" font-size="12" fill="#666666" text-anchor="end" transform="rotate(-45 1411.1 868.0)" letter-spacing="-0.25">May 12 2025</text>
<line x1="1440.5" y1="849.4" x2="1440.5" y2="857.4" stroke="#dddddd" stroke-width="1" />
<text x="1447.8" y="868.0" font-size="12" fill="#666666" text-anchor="end" transform="rotate(-45 1447.8 868.0)" letter-spacing="-0.25">May 14 2025</text>
<line x1="1477.5" y1="849.4" x2="1477.5" y2="857.4" stroke="#dddddd" stroke-width="1" />
<text x="1484.6" y="868.0" font-size="12" fill="#666666" text-anchor="end" transform="rotate(-45 1484.6 868.0)" letter-spacing="-0.25">May 16 2025</text>
<line x1="1514.5" y1="849.4" x2="1514.5" y2="857.4" stroke="#dddddd" stroke-width="1" />
<text x="1521.3" y="868.0" font-size="12" fill="#666666" text-anchor="end" transform="rotate(-45 1521.3 868.0)" letter-spacing="-0.25">May 18 2025</text>
<line x1="1550.5" y1="849.4" x2="1550.5" y2="857.4" stroke="#dddddd" stroke-width="1" />
<text x="1558.0" y="868.0" font-size="12" fill="#666666" text-anchor="end" transform="rotate(-45 1558.0 868.0)" letter-spacing="-0.25">May 20 2025</text>
<line x1="1587.5" y1="849.4" x2="1587.5" y2="857.4" stroke="#dddddd" stroke-width="1" />
<text x="1594.7" y="868.0" font-size="12" fill="#666666" text-anchor="end" transform="rotate(-45 1594.7 868.0)" letter-spacing="-0.25">May 22 2025</text>
<line x1="1624.5" y1="849.4" x2="1624.5" y2="857.4" stroke="#dddddd" stroke-width="1" />
<text x="1631.4" y="868.0" font-size="12" fill="#666666" text-anchor="end" transform="rotate(-45 1631.4 868.0)" letter-spacing="-0.25">May 24 2025</text>
<line x1="1660.5" y1="849.4" x2="1660.5" y2="857.4" stroke="#dddddd" stroke-width="1" />
<text x="1668.1" y="868.0" font-size="12" fill="#666666" text-anchor="end" transform="rotate(-45 1668.1 868.0)" letter-spacing="-0.25">May 26 2025</text>
<line x1="1697.5" y1="849.4" x2="1697.5" y2="857.4" stroke="#dddddd" stroke-width="1" />
<text x="1704.9" y="868.0" font-size="12" fill="#666666" text-anchor="end" transform="rotate(-45 1704.9 868.0)" letter-spacing="-0.25">May 28 2025</text>
<line x1="1734.5" y1="849.4" x2="1734.5" y2="857.4" stroke="#dddddd" stroke-width="1" />
<text x="1741.6" y="868.0" font-size="12" fill="#666666" text-anchor="end" transform="rotate(-45 1741.6 868.0)" letter-spacing="-0.25">May 30 2025</text>
<line x1="1771.5" y1="849.4" x2="1771.5" y2="857.4" stroke="#dddddd" stroke-width="1" />
<text x="1778.3" y="868.0" font-size="12" fill="#666666" text-anchor="end" transform="rotate(-45 1778.3 868.0)" letter-spacing="-0.25">Jun 1 2025</text>
<line x1="1807.5" y1="849.4" x2="1807.5" y2="857.4" stroke="#dddddd" stroke-width="1" />
<text x="1815.0" y="868.0" font-size="12" fill="#666666" text-anchor="end" transform="rotate(-45 1815.0 868.0)" letter-spacing="-0.25">Jun 3 2025</text>
<line x1="1844.5" y1="849.4" x2="1844.5" y2="857.4" stroke="#dddddd" stroke-width="1" />
<text x="1851.7" y="868.0" font-size="12" fill="#666666" text-anchor="end" transform="rotate(-45 1851.7 868.0)" letter-spacing="-0.25">Jun 5 2025</text>
<line x1="1881.5" y1="849.4" x2="1881.5" y2="857.4" stroke="#dddddd" stroke-width="1" />
<text x="1888.4" y="868.0" font-size="12" fill="#666666" text-anchor="end" transform="rotate(-45 1888.4 868.0)" letter-spacing="-0.25">Jun 7 2025</text>
<text x="1633" y="937" font-size="12" fill="#666666" text-anchor="middle">Time</text>
<text x="1318" y="693" font-size="12" fill="#666666" text-anchor="middle" transform="rotate(-90 1318 693)" letter-spacing="-0.1">Unique Actor Count</text>
<rect x="1454" y="514.5" width="14" height="13.5" rx="0" fill="#cfe2fb" stroke="#1a6cdc" stroke-width="2" />
<text x="1473.2" y="524.6" font-size="12" fill="#666666" letter-spacing="-0.3">Sessions w/o Play Event</text>
<rect x="1608" y="514.5" width="14" height="13.5" rx="0" fill="#fde3cc" stroke="#f78a1c" stroke-width="2" />
<text x="1627.9" y="524.6" font-size="12" fill="#666666" letter-spacing="-0.3">Sessions with Play Event</text>
<path d="M22.8 91.2 L30 84.6 L37.2 91.2 M24.6 89.6 V97.6 H35.4 V89.6" fill="none" stroke="#3b4462" stroke-width="1.5" stroke-linecap="round" stroke-linejoin="round" />
<circle cx="28.5" cy="129.4" r="5.9" fill="none" stroke="#3b4462" stroke-width="1.5"/>
<path d="M32.8 133.7 L37.6 138.5" fill="none" stroke="#3b4462" stroke-width="1.5" stroke-linecap="round" stroke-linejoin="round" />
<path d="M23.3 171 H36.7 M30 164.3 V177.7" fill="none" stroke="#3b4462" stroke-width="1.5" stroke-linecap="round" stroke-linejoin="round" />
<path d="M29 217.3 H23.8 Q23 217.3 23 216.5 V205.2 Q23 204.4 23.8 204.4 H28.6 L32 207.8 V211.6" fill="none" stroke="#3b4462" stroke-width="1.5" stroke-linecap="round" stroke-linejoin="round" />
<path d="M28.3 204.4 L32.2 208.3 H29.1 Q28.3 208.3 28.3 207.5 Z" fill="#3b4462"/>
<path d="M30 218.3 L30.6 215.4 L35.4 210.6 L37.5 212.7 L32.7 217.5 Z M36.1 209.9 L36.9 209.1 Q37.4 208.6 37.9 209.1 L38.7 209.9 Q39.2 210.4 38.7 210.9 L38.2 211.4 Z" fill="#3b4462"/>
<path d="M22.8 244.6 H26.6 M23.3 244.6 V254.2 Q23.3 255.8 24.9 255.8 H25.1 Q26.1 255.8 26.1 254.8 V244.6 M23.3 249.5 H26.1" fill="none" stroke="#3b4462" stroke-width="1.3" stroke-linecap="round" stroke-linejoin="round" />
<path d="M29.6 244.7 H36 M30.7 244.7 V249.8 L27.9 255.3 Q27.4 257 29.2 257 H36.4 Q38.2 257 37.7 255.3 L34.9 249.8 V244.7 M28.8 253.8 H36.9" fill="none" stroke="#3b4462" stroke-width="1.4" stroke-linecap="round" stroke-linejoin="round" />
<path d="M22.8 303.5 Q22.8 301 24.5 301 H27.6 L29.4 303 H36.2 Q37.4 303 37.4 304.2 V313.4 Q37.4 314.6 36.2 314.6 H24 Q22.8 314.6 22.8 313.4 Z" fill="none" stroke="#3b4462" stroke-width="1.5" stroke-linecap="round" stroke-linejoin="round" />
<circle cx="30.2" cy="360.6" r="2.9" fill="none" stroke="#3b4462" stroke-width="1.5"/>
<path d="M23.4 371.9 Q23.4 366.3 30.2 366.3 Q37 366.3 37 371.9 Z" fill="none" stroke="#3b4462" stroke-width="1.5" stroke-linecap="round" stroke-linejoin="round" />
<path d="M23.6 412.2 V397.6 M23.6 397.8 Q27 396.5 30.5 398 Q34 399.5 37.3 398.4 V407.6 Q34 408.8 30.5 407.3 Q27 405.8 23.6 407.2" fill="none" stroke="#3b4462" stroke-width="1.5" stroke-linecap="round" stroke-linejoin="round" />
<path d="M23 838.6 Q23 836.2 30 836.2 Q37 836.2 37 838.6 V849.3 Q37 851.7 30 851.7 Q23 851.7 23 849.3 Z M23 842.2 Q23 844.3 30 844.3 Q37 844.3 37 842.2 M23 846.2 Q23 848.3 30 848.3 Q37 848.3 37 846.2" fill="none" stroke="#3b4462" stroke-width="1.4" stroke-linecap="round" stroke-linejoin="round" />
<path d="M27.07 878.58 L28.17 877.78 L28.17 876.22 L31.83 876.22 L31.83 877.78 L32.93 878.58 L32.97 878.60 L34.21 879.15 L35.56 878.38 L37.39 881.55 L36.05 882.33 L35.90 883.68 L35.90 883.72 L36.05 885.07 L37.39 885.85 L35.56 889.02 L34.21 888.25 L32.97 888.80 L32.93 888.82 L31.83 889.62 L31.83 891.18 L28.17 891.18 L28.17 889.62 L27.07 888.82 L27.03 888.80 L25.79 888.25 L24.44 889.02 L22.61 885.85 L23.95 885.07 L24.10 883.72 L24.10 883.68 L23.95 882.33 L22.61 881.55 L24.44 878.38 L25.79 879.15 L27.03 878.60 Z" fill="none" stroke="#3b4462" stroke-width="1.4" stroke-linecap="round" stroke-linejoin="round" />
<circle cx="30" cy="883.7" r="2.1" fill="none" stroke="#3b4462" stroke-width="1.4"/>
<circle cx="30" cy="923.8" r="7.4" fill="none" stroke="#3b4462" stroke-width="1.5"/>
<path d="M28 921.9 Q28 919.9 30.1 919.9 Q32.2 919.9 32.2 921.8 Q32.2 923.1 30.2 923.9 V924.7" fill="none" stroke="#3b4462" stroke-width="1.6" stroke-linecap="round" stroke-linejoin="round" />
<circle cx="30.2" cy="927.2" r="0.95" fill="#3b4462"/>
<path d="M2.6 67 L2.6 78.6 L5.4 76.4 L7.6 81.4 L10 80.6 L8.2 75.6 L11.6 75.4 Z" fill="rgba(0,0,0,0.10)"/>
<path d="M1.8 65.3 L1.8 76.8 L4.6 74.3 L6.9 79.9 L9.1 79.1 L6.8 73.7 L10.4 73.6 Z" fill="#000" stroke="#fff" stroke-width="0.8" stroke-linejoin="round"/>
<rect x="49.5" y="881.5" width="25" height="25" rx="5" fill="rgba(255,255,255,0.55)" stroke="#dfe3ee" stroke-width="1" />
<circle cx="62" cy="894" r="6.6" fill="#d4d7df"/>
<path d="M58.6 894 H65 M62.6 891.4 L65.2 894 L62.6 896.6" fill="none" stroke="#ffffff" stroke-width="1.5" stroke-linecap="round" stroke-linejoin="round" />
<path d="M165.4 21.2 Q165.4 19.6 167 19.6 H169.6 L171.3 21.4 H177.4 Q178.6 21.4 178.6 22.6 V30.8 Q178.6 32 177.4 32 H166.6 Q165.4 32 165.4 30.8 Z" fill="none" stroke="#2d3344" stroke-width="1.4" stroke-linecap="round" stroke-linejoin="round" />
<path d="M188 24.2 L192.3 28.2 L196.6 24.2" fill="none" stroke="#2d3344" stroke-width="1.25" stroke-linecap="round" stroke-linejoin="round" />
<path d="M88.7 52.3 Q88.7 51.4 89.6 51.4 H100.5 Q101.4 51.4 101.4 52.3 V59.4 Q101.4 60.3 100.5 60.3 H89.6 Q88.7 60.3 88.7 59.4 Z M95 60.3 V62.5 M92.2 62.6 H97.9" fill="none" stroke="#d4368d" stroke-width="1.3" stroke-linecap="round" stroke-linejoin="round" />
<path d="M90.9 57.9 L93.3 55.4 L95.2 56.9 L98.7 53.5 M96.9 53.4 H98.8 V55.3" fill="none" stroke="#d4368d" stroke-width="1.2" stroke-linecap="round" stroke-linejoin="round" />
<circle cx="1553.9" cy="28.9" r="6.5" fill="none" stroke="#2b303d" stroke-width="1.35" stroke-dasharray="3.1 0.65" stroke-linecap="butt"/>
<path d="M1552.6 27.1 Q1552.6 25.9 1554.1 25.9 Q1555.6 25.9 1555.6 27.1 Q1555.6 28.1 1554.2 28.8 V29.5" fill="none" stroke="#2b303d" stroke-width="1.35" stroke-linecap="round" stroke-linejoin="round" />
<circle cx="1554.2" cy="31.3" r="0.8" fill="#2b303d"/>
<path d="M1580 29 H1591.9 M1585.9 23.1 V34.9" fill="none" stroke="#161b29" stroke-width="1.9" stroke-linecap="round" stroke-linejoin="round" />
<path d="M1660.6 26.9 L1665.2 31 L1669.8 26.9" fill="none" stroke="#2b303d" stroke-width="1.15" stroke-linecap="round" stroke-linejoin="round" />
<rect x="1691.3" y="22.2" width="5.3" height="5.3" rx="1.2" fill="none" stroke="#2b303d" stroke-width="1.6" />
<rect x="1699.4" y="22.2" width="5.3" height="5.3" rx="1.2" fill="none" stroke="#2b303d" stroke-width="1.6" />
<rect x="1691.3" y="30.3" width="5.3" height="5.3" rx="1.2" fill="none" stroke="#2b303d" stroke-width="1.6" />
<rect x="1699.4" y="30.3" width="5.3" height="5.3" rx="1.2" fill="none" stroke="#2b303d" stroke-width="1.6" />
<path d="M1725.6 22.8 H1736.6 Q1737.4 22.8 1737.4 23.6 V31.8 Q1737.4 32.6 1736.6 32.6 H1731.6 L1729 34.8 L1729.3 32.6 H1725.6 Q1724.8 32.6 1724.8 31.8 V23.6 Q1724.8 22.8 1725.6 22.8 Z" fill="none" stroke="#2b303d" stroke-width="1.4" stroke-linecap="round" stroke-linejoin="round" />
<path d="M1727.6 27.7 H1730.2 M1731.3 27.7 H1732 M1733 27.7 H1734.4 M1727.6 29.9 H1728.3 M1729.4 29.9 H1734.4" fill="none" stroke="#2b303d" stroke-width="1.0" stroke-linecap="round" stroke-linejoin="round" stroke-linecap="butt"/>
<path d="M1763.2 25.6 L1765 23.8 Q1766.6 22.3 1768.3 23.9 Q1769.9 25.6 1768.3 27.2 L1765.6 29.9 Q1764 31.4 1762.3 29.9" fill="none" stroke="#2b303d" stroke-width="1.6" stroke-linecap="round" stroke-linejoin="round" />
<path d="M1762.8 32.4 L1761 34.2 Q1759.4 35.7 1757.7 34.1 Q1756.1 32.4 1757.7 30.8 L1760.4 28.1 Q1762 26.6 1763.7 28.1" fill="none" stroke="#2b303d" stroke-width="1.6" stroke-linecap="round" stroke-linejoin="round" />
<circle cx="1793.4" cy="25.7" r="2.7" fill="none" stroke="#2b303d" stroke-width="1.5"/>
<path d="M1788.3 35 V33.6 Q1788.3 30.9 1791 30.9 H1795.8 Q1798.5 30.9 1798.5 33.6 V35 M1797.6 23.2 Q1799.4 25.7 1797.6 28.3 M1800.3 31.2 Q1801.6 32.2 1801.6 33.8 V35" fill="none" stroke="#2b303d" stroke-width="1.5" stroke-linecap="round" stroke-linejoin="round" />
<circle cx="1827.2" cy="23.8" r="1.05" fill="#2b303d"/>
<circle cx="1827.2" cy="28.9" r="1.05" fill="#2b303d"/>
<circle cx="1827.2" cy="33.9" r="1.05" fill="#2b303d"/>
<path d="M756 159.2 L760.2 163.1 L764.4 159.2" fill="none" stroke="#3a4054" stroke-width="1.2" stroke-linecap="round" stroke-linejoin="round" />
<rect x="42.5" y="103.4" width="1871" height="101.5" rx="175" ry="51" fill="none" stroke="#ff4e40" stroke-width="3"/>
</svg></body></html>
